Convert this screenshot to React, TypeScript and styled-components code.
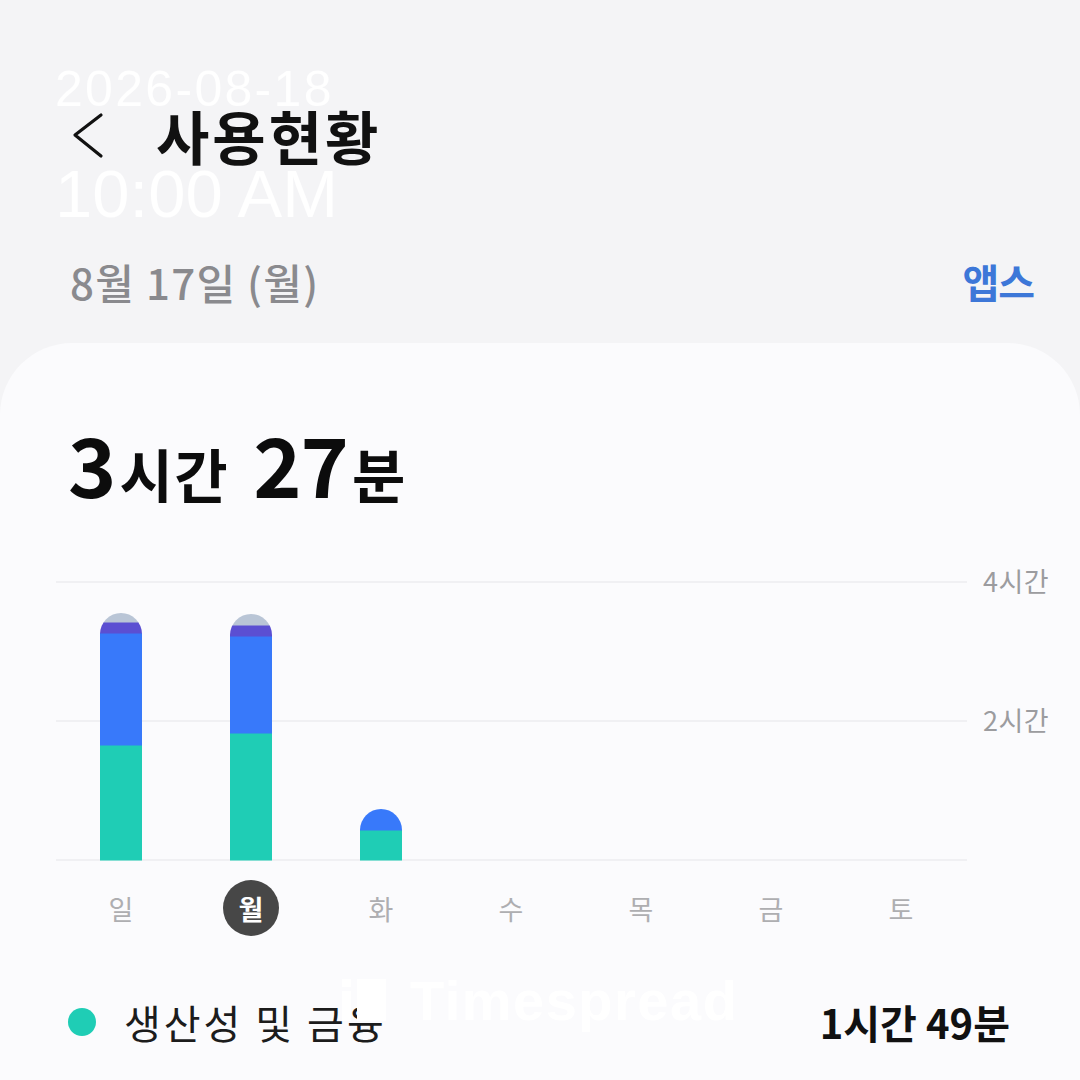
import React from "react";
import styled, { createGlobalStyle } from "styled-components";

const Global = createGlobalStyle`
  html, body { margin: 0; padding: 0; background: #f4f4f6; }
  body { font-family: "Noto Sans CJK KR", "Noto Sans", sans-serif; }
`;

const Page = styled.div`
  position: relative;
  width: 1080px;
  height: 1080px;
  overflow: hidden;
  background: #f4f4f6;
  display: flex;
  flex-direction: column;
`;

const TitleRow = styled.div`
  display: flex;
  align-items: center;
  height: 60px;
  margin-top: 105px;
  padding-left: 70px;
  gap: 50px;
`;

const Title = styled.h1`
  margin: 0;
  font-size: 58px;
  font-weight: 700;
  color: #111;
  letter-spacing: 3px;
  line-height: 1;
`;

const DateRow = styled.div`
  display: flex;
  justify-content: space-between;
  align-items: center;
  height: 50px;
  margin-top: 91px;
  padding: 0 46px 0 70px;
`;

const DateText = styled.span`
  font-size: 42px;
  font-weight: 500;
  color: #8a8a8e;
  letter-spacing: 1.3px;
`;

const AppsLink = styled.span`
  font-size: 40px;
  font-weight: 700;
  color: #3d77d8;
  letter-spacing: -1px;
`;

const Card = styled.div`
  flex: 1;
  margin-top: 37px;
  background: #fbfbfd;
  border-radius: 72px 72px 0 0;
  display: flex;
  flex-direction: column;
  padding: 0 0 0 56px;
`;

const Total = styled.div`
  margin-top: 79px;
  padding-left: 12px;
  display: flex;
  align-items: baseline;
  color: #0c0c0c;
  font-weight: 700;
  line-height: 1;
`;

const Num = styled.span`
  font-size: 82px;
  letter-spacing: -1px;
`;

const Unit = styled.span<{ $gap?: boolean }>`
  font-size: 58px;
  letter-spacing: 1.5px;
  margin-left: 4px;
  margin-right: ${(p) => (p.$gap ? "24px" : "0")};
`;

const ChartRow = styled.div`
  display: flex;
  margin-top: 77px;
`;

const Plot = styled.svg`
  display: block;
  width: 911px;
  height: 280px;
`;

const AxisLabels = styled.div`
  display: grid;
  grid-template-rows: 139px 139px;
  margin-left: 16px;
`;

const AxisLabel = styled.span`
  font-size: 27px;
  color: #9c9c9f;
  line-height: 1;
  transform: translateY(-14px);
  letter-spacing: 0.5px;
`;

const DayRow = styled.div`
  display: grid;
  grid-template-columns: repeat(7, 130px);
  margin-top: 18px;
  height: 58px;
`;

const Day = styled.div<{ $active?: boolean }>`
  justify-self: center;
  align-self: center;
  width: 56px;
  height: 56px;
  border-radius: 50%;
  display: flex;
  align-items: center;
  justify-content: center;
  font-size: 27px;
  font-weight: ${(p) => (p.$active ? 700 : 400)};
  color: ${(p) => (p.$active ? "#ffffff" : "#aeaeb1")};
  background: ${(p) => (p.$active ? "#474747" : "transparent")};
`;

const LegendRow = styled.div`
  display: flex;
  align-items: center;
  justify-content: space-between;
  margin-top: 56px;
  padding: 0 70px 0 12px;
`;

const LegendLeft = styled.div`
  display: flex;
  align-items: center;
  gap: 28px;
`;

const Dot = styled.span<{ $color: string }>`
  width: 28px;
  height: 28px;
  border-radius: 50%;
  background: ${(p) => p.$color};
`;

const LegendName = styled.span`
  font-size: 40px;
  color: #1c1c1c;
  letter-spacing: 3px;
`;

const LegendValue = styled.span`
  font-size: 40px;
  font-weight: 700;
  color: #111;
  letter-spacing: 0px;
`;

const Stamp = styled.div`
  position: absolute;
  left: 55px;
  top: 64px;
  color: rgba(255, 255, 255, 0.92);
  font-family: "Liberation Sans", Arial, sans-serif;
  line-height: 1;
  pointer-events: none;
`;

const StampDate = styled.div`
  font-size: 50px;
  letter-spacing: 2.3px;
`;

const StampTime = styled.div`
  font-size: 67px;
  margin-top: 46px;
`;

const Watermark = styled.div`
  position: absolute;
  left: 340px;
  top: 968px;
  display: flex;
  align-items: center;
  gap: 22px;
  color: #ffffff;
  font-family: "Liberation Sans", Arial, sans-serif;
  font-weight: 700;
  font-size: 56px;
  letter-spacing: 1.5px;
  pointer-events: none;
`;

type Seg = { h: number; color: string };
const bars: Seg[][] = [
  [
    { h: 115, color: "#1fcdb5" },
    { h: 112, color: "#3879fa" },
    { h: 11, color: "#5b4fd2" },
    { h: 9, color: "#b9c5d6" },
  ],
  [
    { h: 127, color: "#1fcdb5" },
    { h: 97, color: "#3879fa" },
    { h: 11, color: "#5b4fd2" },
    { h: 11, color: "#b9c5d6" },
  ],
  [
    { h: 30, color: "#1fcdb5" },
    { h: 21, color: "#3879fa" },
  ],
];

const days = ["일", "월", "화", "수", "목", "금", "토"];

function Bar({ segs, cx }: { segs: Seg[]; cx: number }) {
  const w = 42;
  const base = 279;
  const total = segs.reduce((a, s) => a + s.h, 0);
  const top = base - total;
  const id = `clip-${cx}`;
  let y = base;
  return (
    <g>
      <defs>
        <clipPath id={id}>
          <rect x={cx - w / 2} y={top} width={w} height={total + 30} rx={w / 2} />
          <rect x={cx - w / 2} y={top + w / 2} width={w} height={total - w / 2} />
        </clipPath>
      </defs>
      <g clipPath={`url(#${id})`}>
        {segs.map((s, i) => {
          y -= s.h;
          return <rect key={i} x={cx - w / 2} y={y} width={w} height={s.h + 0.5} fill={s.color} />;
        })}
      </g>
    </g>
  );
}

export default function App() {
  return (
    <Page>
      <Global />
      <TitleRow>
        <svg width="36" height="50" viewBox="0 0 36 50">
          <path d="M31 5 L5 25 L31 46" fill="none" stroke="#111" strokeWidth="3.2" strokeLinecap="round" strokeLinejoin="round" />
        </svg>
        <Title>사용현황</Title>
      </TitleRow>
      <DateRow>
        <DateText>8월 17일 (월)</DateText>
        <AppsLink>앱스</AppsLink>
      </DateRow>
      <Card>
        <Total>
          <Num>3</Num>
          <Unit $gap>시간</Unit>
          <Num>27</Num>
          <Unit>분</Unit>
        </Total>
        <ChartRow>
          <Plot viewBox="0 0 911 280">
            <line x1="0" y1="1" x2="911" y2="1" stroke="#ececef" strokeWidth="1.5" />
            <line x1="0" y1="140" x2="911" y2="140" stroke="#ececef" strokeWidth="1.5" />
            <line x1="0" y1="279" x2="911" y2="279" stroke="#ececef" strokeWidth="1.5" />
            {bars.map((b, i) => (
              <Bar key={i} segs={b} cx={65 + i * 130} />
            ))}
          </Plot>
          <AxisLabels>
            <AxisLabel>4시간</AxisLabel>
            <AxisLabel>2시간</AxisLabel>
          </AxisLabels>
        </ChartRow>
        <DayRow>
          {days.map((d) => (
            <Day key={d} $active={d === "월"}>
              {d}
            </Day>
          ))}
        </DayRow>
        <LegendRow>
          <LegendLeft>
            <Dot $color="#1fcdb5" />
            <LegendName>생산성 및 금융</LegendName>
          </LegendLeft>
          <LegendValue>1시간 49분</LegendValue>
        </LegendRow>
      </Card>
      <Stamp>
        <StampDate>2026-08-18</StampDate>
        <StampTime>10:00 AM</StampTime>
      </Stamp>
      <Watermark>
        <svg width="48" height="48" viewBox="0 0 48 48">
          <rect x="2" y="2" width="9" height="8" fill="#fff" />
          <rect x="2" y="14" width="9" height="30" fill="#fff" />
          <rect x="17" y="2" width="29" height="42" fill="#fff" />
        </svg>
        <span>Timespread</span>
      </Watermark>
    </Page>
  );
}
